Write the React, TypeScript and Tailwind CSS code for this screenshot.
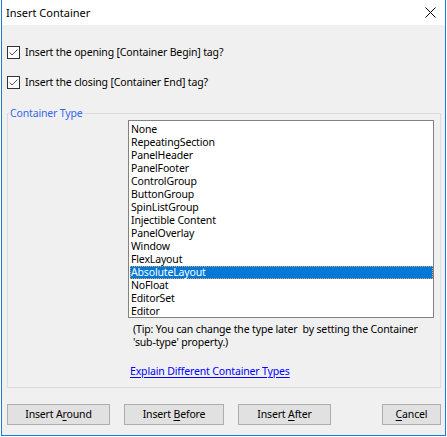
import React from "react";

const items = [
  "None",
  "RepeatingSection",
  "PanelHeader",
  "PanelFooter",
  "ControlGroup",
  "ButtonGroup",
  "SpinListGroup",
  "Injectible Content",
  "PanelOverlay",
  "Window",
  "FlexLayout",
  "AbsoluteLayout",
  "NoFloat",
  "EditorSet",
  "Editor",
];

function Check() {
  return (
    <div className="w-[13px] h-[13px] border border-[#333333] bg-white flex items-center justify-center shrink-0">
      <svg width="11" height="11" viewBox="0 0 11 11">
        <path d="M1.5 5.5 L4 8 L9.5 2.5" fill="none" stroke="#555555" strokeWidth="1" />
      </svg>
    </div>
  );
}

function Btn({ pre, u, post, cls }: { pre: string; u: string; post: string; cls: string }) {
  return (
    <div
      className={`h-[21px] border border-[#adadad] bg-[#e1e1e1] flex items-center justify-center text-[10.5px] tracking-[-0.15px] leading-[13px] text-black ${cls}`}
    >
      <span className="whitespace-pre">
        {pre}
        <span className="underline underline-offset-2">{u}</span>
        {post}
      </span>
    </div>
  );
}

export default function App() {
  return (
    <div
      className="w-[447px] h-[437px] bg-white"
      style={{ fontFamily: '"Noto Sans", "Open Sans", sans-serif' }}
    >
      <div className="ml-[1px] w-[445px] h-[436px] border-l border-r border-b border-[#1c7bd0] flex flex-col">
        <div className="h-[25px] bg-white flex items-center justify-between pl-[4px] pr-[8px]">
          <span className="text-[11px] leading-[14px] text-black">Insert Container</span>
          <svg width="11" height="11" viewBox="0 0 11 11" className="mr-[1px]">
            <path d="M0.5 0.5 L10.5 10.5 M10.5 0.5 L0.5 10.5" stroke="#000" strokeWidth="1" />
          </svg>
        </div>
        <div className="flex-1 bg-[#f0f0f0] flex flex-col text-[10.5px] tracking-[-0.15px] text-black">
          <div className="mt-[21px] ml-[5px] h-[13px] flex items-center gap-[5px]">
            <Check />
            <span className="leading-[13px]">Insert the opening [Container Begin] tag?</span>
          </div>
          <div className="mt-[17px] ml-[5px] h-[13px] flex items-center gap-[5px]">
            <Check />
            <span className="leading-[13px]">Insert the closing [Container End] tag?</span>
          </div>
          <div className="mt-[24px] ml-[5px] w-[434px] h-[275px] border border-[#dcdcdc] relative">
            <span className="absolute left-[1px] -top-[8px] px-[1px] bg-[#f0f0f0] text-[#3366ee] leading-[14px]">
              Container Type
            </span>
            <div className="ml-[120px] mt-[6px] w-[306px] h-[198px] border border-[#828282] bg-white flex flex-col pt-[2px] overflow-hidden">
              {items.map((it) =>
                it === "AbsoluteLayout" ? (
                  <div
                    key={it}
                    className="h-[13px] shrink-0 leading-[11px] ml-[1px] pl-[0px] bg-[#0078d7] text-white border border-dotted border-[#e8a060] flex items-center"
                  >
                    {it}
                  </div>
                ) : (
                  <div key={it} className="h-[13px] shrink-0 leading-[13px] pl-[2px]">
                    {it}
                  </div>
                )
              )}
            </div>
            <div className="ml-[125px] mt-[5px] leading-[13px] whitespace-pre">
              {"(Tip: You can change the type later  by setting the Container"}
              <br />
              {"'sub-type' property.)"}
            </div>
            <div className="ml-[122px] mt-[16px] leading-[13px] text-[#0000ff] underline underline-offset-2">
              Explain Different Container Types
            </div>
          </div>
          <div className="mt-[16px] flex">
            <Btn pre="Insert A" u="r" post="ound" cls="ml-[5px] w-[103px]" />
            <Btn pre="Insert " u="B" post="efore" cls="ml-[14px] w-[100px]" />
            <Btn pre="Insert " u="A" post="fter" cls="ml-[14px] w-[93px]" />
            <Btn pre="" u="C" post="ancel" cls="ml-[51px] w-[59px]" />
          </div>
        </div>
      </div>
    </div>
  );
}
